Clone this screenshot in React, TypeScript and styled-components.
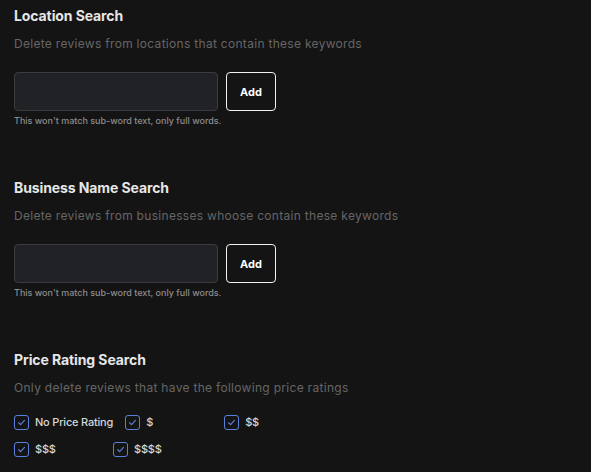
import React from "react";
import styled, { createGlobalStyle } from "styled-components";

const Global = createGlobalStyle`
  html, body { margin: 0; padding: 0; background: #141414; }
  body { font-family: Inter, "Noto Sans", sans-serif; -webkit-font-smoothing: antialiased; }
  * { box-sizing: border-box; }
`;

const Page = styled.div`
  padding: 6px 14px 0 14px;
  display: flex;
  flex-direction: column;
  gap: 51px;
`;

const Section = styled.section`
  display: flex;
  flex-direction: column;
`;

const Heading = styled.h2`
  margin: 0;
  font-size: 14px;
  line-height: 20px;
  font-weight: 700;
  color: #e6e6e6;
  letter-spacing: -0.1px;
`;

const Description = styled.p`
  margin: 9px 0 0 0;
  font-size: 12px;
  line-height: 18px;
  color: #666666;
  letter-spacing: 0.3px;
`;

const InputRow = styled.div`
  margin-top: 19px;
  display: flex;
  gap: 8px;
  align-items: stretch;
`;

const TextInput = styled.input`
  width: 204px;
  height: 39px;
  background: #212226;
  border: 1px solid #3a3b40;
  border-radius: 4px;
  color: #e6e6e6;
  font-family: inherit;
  font-size: 13px;
  padding: 0 10px;
  outline: none;
`;

const AddButton = styled.button`
  width: 50px;
  height: 39px;
  background: #141414;
  border: 1px solid #f2f2f2;
  border-radius: 4px;
  color: #ffffff;
  font-family: inherit;
  font-size: 11px;
  font-weight: 700;
  cursor: pointer;
  padding: 0;
`;

const Hint = styled.div`
  margin-top: 4px;
  font-size: 9px;
  line-height: 12px;
  font-weight: 500;
  color: #8c8c8c;
`;

const CheckGroup = styled.div`
  margin-top: 17px;
  display: flex;
  flex-wrap: wrap;
  column-gap: 12px;
  row-gap: 11px;
  width: 340px;
`;

const CheckItem = styled.label`
  display: flex;
  align-items: center;
  gap: 6px;
  min-width: 87px;
  height: 16px;
  cursor: pointer;
`;

const Box = styled.span`
  width: 15px;
  height: 15px;
  border: 1.5px solid #5b80d8;
  border-radius: 3px;
  display: flex;
  align-items: center;
  justify-content: center;
  flex-shrink: 0;
`;

const CheckLabel = styled.span`
  font-size: 11px;
  line-height: 16px;
  font-weight: 500;
  color: #d6d6d6;
  letter-spacing: -0.2px;
`;

const Check = ({ label }: { label: string }) => (
  <CheckItem>
    <Box>
      <svg width="9" height="9" viewBox="0 0 10 10" fill="none">
        <path d="M1.8 5.3 L4 7.4 L8.3 2.6" stroke="#5b80d8" strokeWidth="1.3" strokeLinecap="round" strokeLinejoin="round" />
      </svg>
    </Box>
    <CheckLabel>{label}</CheckLabel>
  </CheckItem>
);

const KeywordSection = ({ title, desc }: { title: string; desc: string }) => (
  <Section>
    <Heading>{title}</Heading>
    <Description>{desc}</Description>
    <InputRow>
      <TextInput type="text" />
      <AddButton>Add</AddButton>
    </InputRow>
    <Hint>This won't match sub-word text, only full words.</Hint>
  </Section>
);

export default function App() {
  return (
    <>
      <Global />
      <Page>
        <KeywordSection
          title="Location Search"
          desc="Delete reviews from locations that contain these keywords"
        />
        <KeywordSection
          title="Business Name Search"
          desc="Delete reviews from businesses whoose contain these keywords"
        />
        <Section>
          <Heading>Price Rating Search</Heading>
          <Description>Only delete reviews that have the following price ratings</Description>
          <CheckGroup>
            {["No Price Rating", "$", "$$", "$$$", "$$$$"].map((l) => (
              <Check key={l} label={l} />
            ))}
          </CheckGroup>
        </Section>
      </Page>
    </>
  );
}
